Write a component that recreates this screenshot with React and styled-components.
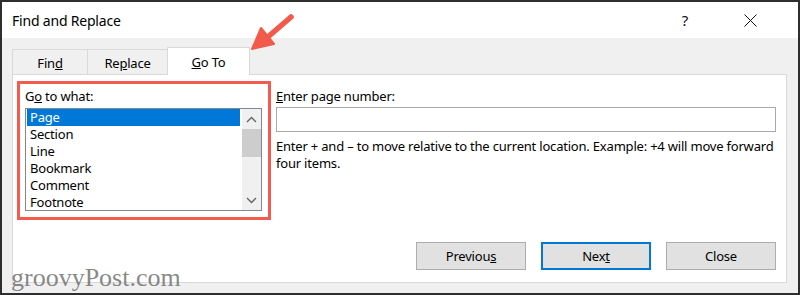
import React from "react";
import styled, { createGlobalStyle, css } from "styled-components";

const GlobalStyle = createGlobalStyle`
  html, body {
    margin: 0;
    padding: 0;
    background: #ffffff;
  }
  * {
    box-sizing: border-box;
  }
`;

const Window = styled.div`
  position: relative;
  width: 800px;
  height: 295px;
  border: 2px solid #2e2e2e;
  display: flex;
  flex-direction: column;
  font-family: "Noto Sans", "Open Sans", sans-serif;
  font-size: 13px;
  letter-spacing: -0.2px;
  color: #000;
  overflow: hidden;
`;

const TitleBar = styled.div`
  height: 36px;
  background: #ffffff;
  display: flex;
  align-items: center;
  justify-content: space-between;
  padding-left: 10px;
`;

const Title = styled.div`
  font-size: 14px;
  color: #000;
`;

const TitleControls = styled.div`
  display: flex;
  align-items: center;
  gap: 56px;
  padding-right: 41px;
`;

const HelpGlyph = styled.span`
  font-size: 15px;
  color: #111;
`;

const Body = styled.div`
  flex: 1;
  background: #f0f0f0;
  padding: 9px 11px 10px 10px;
  display: flex;
  flex-direction: column;
`;

const TabStrip = styled.div`
  height: 27px;
  display: flex;
  align-items: flex-end;
  padding-left: 1px;
`;

const Tab = styled.div`
  width: ${(p) => p.width}px;
  height: 25px;
  margin-left: -1px;
  border: 1px solid #d9d9d9;
  border-bottom: none;
  background: #f0f0f0;
  display: flex;
  align-items: center;
  justify-content: center;
  padding-top: 1px;
  ${(p) =>
    p.active &&
    css`
      height: 28px;
      margin-bottom: -1px;
      background: #ffffff;
      position: relative;
      z-index: 1;
      padding-top: 0;
    `}
`;

const Panel = styled.div`
  flex: 1;
  background: #ffffff;
  border: 1px solid #d9d9d9;
  display: flex;
  flex-direction: column;
  padding: 6px 10px 12px 4px;
`;

const TopRow = styled.div`
  display: flex;
  align-items: flex-start;
  gap: 5px;
`;

const GoToGroup = styled.div`
  width: 254px;
  border: 3px solid #f45a4d;
  padding: 4px 6px 6px 5px;
`;

const FieldLabel = styled.div`
  line-height: 17px;
  margin-bottom: ${(p) => p.gap}px;
`;

const ListBox = styled.div`
  height: 103px;
  border: 1px solid #828790;
  display: flex;
  overflow: hidden;
`;

const Items = styled.div`
  flex: 1;
  padding-left: 1px;
  margin-right: 2px;
`;

const Item = styled.div`
  height: 17px;
  line-height: 17px;
  padding-left: 3px;
  white-space: nowrap;
  ${(p) =>
    p.selected &&
    css`
      background: #0078d7;
      color: #ffffff;
    `}
`;

const ScrollBar = styled.div`
  width: 19px;
  background: #f0f0f0;
  display: flex;
  flex-direction: column;
`;

const ScrollButton = styled.div`
  height: 20px;
  display: flex;
  align-items: center;
  justify-content: center;
`;

const Thumb = styled.div`
  height: 28px;
  background: #cdcdcd;
`;

const Track = styled.div`
  flex: 1;
`;

const RightColumn = styled.div`
  flex: 1;
  padding-top: 7px;
`;

const TextInput = styled.div`
  height: 25px;
  border: 1px solid #aaaaaa;
  background: #ffffff;
`;

const HelpText = styled.p`
  margin: 6px 0 0;
  line-height: 17px;
`;

const ButtonRow = styled.div`
  margin-top: auto;
  display: flex;
  justify-content: flex-end;
  gap: 15px;
`;

const Button = styled.div`
  width: 110px;
  height: 28px;
  background: #e1e1e1;
  border: 1px solid #adadad;
  display: flex;
  align-items: center;
  justify-content: center;
  ${(p) =>
    p.primary &&
    css`
      border: 2px solid #0078d7;
    `}
`;

const Watermark = styled.div`
  position: absolute;
  left: 9px;
  bottom: 0px;
  font-family: "Liberation Serif", "DejaVu Serif", serif;
  font-size: 26px;
  letter-spacing: 0;
  color: rgba(105, 105, 105, 0.8);
  pointer-events: none;
`;

const ArrowLayer = styled.svg`
  position: absolute;
  left: 0;
  top: 0;
  pointer-events: none;
`;

const Chevron = ({ up }) => (
  <svg width="11" height="7" viewBox="0 0 11 7">
    <path
      d={up ? "M1 6 L5.5 1.5 L10 6" : "M1 1 L5.5 5.5 L10 1"}
      fill="none"
      stroke="#606060"
      strokeWidth="1.3"
    />
  </svg>
);

const CloseIcon = () => (
  <svg width="13" height="13" viewBox="0 0 13 13">
    <path d="M0.5 0.5 L12.5 12.5 M12.5 0.5 L0.5 12.5" stroke="#111" strokeWidth="1" />
  </svg>
);

const targets = ["Page", "Section", "Line", "Bookmark", "Comment", "Footnote"];

export default function App() {
  return (
    <>
      <GlobalStyle />
      <Window>
        <TitleBar>
          <Title>Find and Replace</Title>
          <TitleControls>
            <HelpGlyph>?</HelpGlyph>
            <CloseIcon />
          </TitleControls>
        </TitleBar>
        <Body>
          <TabStrip>
            <Tab width={76}>
              Fin<u>d</u>
            </Tab>
            <Tab width={81}>
              Re<u>p</u>lace
            </Tab>
            <Tab width={83} active>
              <u>G</u>o To
            </Tab>
          </TabStrip>
          <Panel>
            <TopRow>
              <GoToGroup>
                <FieldLabel gap={3}>
                  G<u>o</u> to what:
                </FieldLabel>
                <ListBox>
                  <Items>
                    {targets.map((t, i) => (
                      <Item key={t} selected={i === 0}>
                        {t}
                      </Item>
                    ))}
                  </Items>
                  <ScrollBar>
                    <ScrollButton>
                      <Chevron up />
                    </ScrollButton>
                    <Thumb />
                    <Track />
                    <ScrollButton>
                      <Chevron />
                    </ScrollButton>
                  </ScrollBar>
                </ListBox>
              </GoToGroup>
              <RightColumn>
                <FieldLabel gap={2}>
                  <u>E</u>nter page number:
                </FieldLabel>
                <TextInput />
                <HelpText>
                  Enter + and – to move relative to the current location. Example: +4 will move
                  forward four items.
                </HelpText>
              </RightColumn>
            </TopRow>
            <ButtonRow>
              <Button>
                Previou<u>s</u>
              </Button>
              <Button primary>
                Nex<u>t</u>
              </Button>
              <Button>Close</Button>
            </ButtonRow>
          </Panel>
        </Body>
        <Watermark>groovyPost.com</Watermark>
        <ArrowLayer width="800" height="295" viewBox="0 0 800 295">
          <line x1="289" y1="15" x2="267" y2="34" stroke="#f25a4b" strokeWidth="5.5" strokeLinecap="round" />
          <polygon
            points="250,47 259,26 272,42"
            fill="#f25a4b"
            stroke="#f25a4b"
            strokeWidth="2"
            strokeLinejoin="round"
          />
        </ArrowLayer>
      </Window>
    </>
  );
}
